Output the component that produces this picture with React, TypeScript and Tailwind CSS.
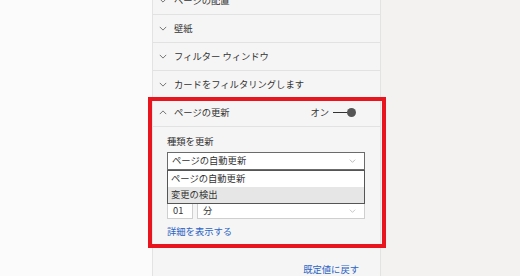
import React from "react";

const font = { fontFamily: '"Noto Sans CJK JP", "Noto Sans", sans-serif' };

function ChevronDown({ className = "" }: { className?: string }) {
  return (
    <svg viewBox="0 0 10 6" className={className} fill="none" stroke="currentColor" strokeWidth="1">
      <path d="M1 1 L5 5 L9 1" />
    </svg>
  );
}

function ChevronUp({ className = "" }: { className?: string }) {
  return (
    <svg viewBox="0 0 10 6" className={className} fill="none" stroke="currentColor" strokeWidth="1">
      <path d="M1 5 L5 1 L9 5" />
    </svg>
  );
}

const collapsed = ["ページの配置", "壁紙", "フィルター ウィンドウ", "カードをフィルタリングします"];

export default function App() {
  return (
    <div className="flex h-[276px] w-[520px] overflow-hidden bg-[#fbfbfb] text-[9.3px] text-[#333]" style={font}>
      <div className="w-[152px] shrink-0" />

      {/* format pane */}
      <div className="w-[229px] shrink-0 border-x border-[#e3e3e3] bg-[#f5f5f5]">
        <div className="-mt-[13px]">
          {collapsed.map(label => (
            <div key={label} className="flex h-[28px] items-center gap-[7px] border-b border-[#e2e2e2] pl-[6px]">
              <ChevronDown className="h-[5px] w-[8px] text-[#555]" />
              <span>{label}</span>
            </div>
          ))}
        </div>

        {/* page refresh section */}
        <div className="relative">
          <div className="pointer-events-none absolute -left-[5px] -right-[6px] -top-[2px] -bottom-[3px] border-[4px] border-[#e8141e]" />

          <div className="flex h-[28px] items-center border-b border-[#e2e2e2] pl-[6px] pr-[24px]">
            <ChevronUp className="h-[5px] w-[8px] text-[#555]" />
            <span className="ml-[7px]">ページの更新</span>
            <span className="ml-auto">オン</span>
            <div className="ml-[4px] flex items-center">
              <div className="h-[1.5px] w-[14px] bg-[#333]" />
              <div className="h-[9px] w-[9px] rounded-full bg-[#555]" />
            </div>
          </div>

          <div className="pl-[14px] pr-[15px] pt-[8px] pb-[6px]">
            <div className="leading-[13px]">種類を更新</div>
            <div className="relative mt-[4px]">
              <div className="flex h-[18px] items-center border border-[#6b6b6b] bg-white pl-[4px] pr-[8px]">
                <span>ページの自動更新</span>
                <ChevronDown className="ml-auto h-[4px] w-[7px] text-[#999]" />
              </div>
              <div className="absolute left-0 right-0 top-full z-10 border border-[#555] bg-white">
                <div className="flex h-[16px] items-center pl-[3px]">ページの自動更新</div>
                <div className="flex h-[16px] items-center bg-[#e6e6e6] pl-[3px]">変更の検出</div>
              </div>
            </div>

            <div className="h-[32px]" />
            <div className="flex gap-[4px]">
              <div className="flex h-[17px] w-[26px] items-center border border-[#cfcfcf] bg-white pl-[5px]">01</div>
              <div className="flex h-[17px] flex-1 items-center border border-[#cfcfcf] bg-white pl-[5px] pr-[8px]">
                <span>分</span>
                <ChevronDown className="ml-auto h-[4px] w-[7px] text-[#aaa]" />
              </div>
            </div>

            <div className="mt-[6px] text-[#2b63c4]">詳細を表示する</div>
          </div>
        </div>

        <div className="mt-[18px] pr-[21px] text-right text-[#2b63c4]">既定値に戻す</div>
      </div>

      <div className="flex-1 bg-[#f3f2f1]" />
    </div>
  );
}
